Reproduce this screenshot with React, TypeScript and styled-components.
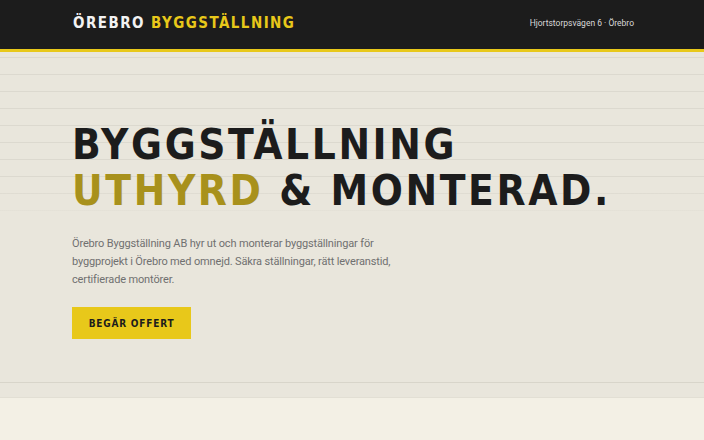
import styled, { createGlobalStyle } from 'styled-components';

const GlobalStyle = createGlobalStyle`
    html, body {
        margin: 0;
        padding: 0;
        background: #f3f0e5;
    }
    * {
        box-sizing: border-box;
    }
`;

const Page = styled.div`
    width: 704px;
    min-height: 440px;
    display: flex;
    flex-direction: column;
    background: #f3f0e5;
`;

const TopBar = styled.header`
    height: 52px;
    background: #1c1c1c;
    border-bottom: 3px solid #e8c81a;
    display: flex;
    align-items: center;
    justify-content: space-between;
    padding: 0 70px 0 73px;
`;

const Logo = styled.div`
    font-family: "DejaVu Sans Condensed", "DejaVu Sans", sans-serif;
    font-weight: bold;
    font-size: 15px;
    letter-spacing: 1.45px;
    color: #f2f2f2;
    margin-top: -4px;
`;

const LogoAccent = styled.span`
    color: #e8c81a;
`;

const Address = styled.div`
    font-family: Roboto, "Liberation Sans", sans-serif;
    font-size: 8.5px;
    color: #d8d8d8;
    margin-top: -3px;
`;

const Hero = styled.section`
    height: 331px;
    padding: 70px 72px 0;
    border-bottom: 1px solid #d8d5ca;
    background:
        linear-gradient(to bottom, rgba(233, 230, 220, 0) 0, rgba(233, 230, 220, 0) 130px, #e9e6dc 175px),
        repeating-linear-gradient(to bottom, transparent 0, transparent 5px, #dcd9cf 5px, #dcd9cf 6px, transparent 6px, transparent 17px);
    background-color: #e9e6dc;
`;

const Headline = styled.h1`
    margin: 0;
    font-family: "DejaVu Sans Condensed", "DejaVu Sans", sans-serif;
    font-weight: bold;
    font-size: 42px;
    line-height: 46px;
    letter-spacing: 2.6px;
    color: #1c1c1c;
`;

const Gold = styled.span`
    color: #a8911c;
`;

const Lead = styled.p`
    margin: 21px 0 0;
    width: 322px;
    font-family: Roboto, "Liberation Sans", sans-serif;
    font-size: 11px;
    letter-spacing: -0.15px;
    line-height: 18px;
    color: #707070;
`;

const QuoteButton = styled.button`
    margin-top: 18px;
    width: 119px;
    height: 32px;
    border: none;
    background: #e8c81a;
    color: #1c1c1c;
    font-family: "DejaVu Sans Condensed", "DejaVu Sans", sans-serif;
    font-weight: bold;
    font-size: 10px;
    letter-spacing: 0.8px;
    cursor: pointer;
`;

const Strip = styled.div`
    height: 15px;
    background: #e9e6dc;
    border-bottom: 1px solid #e2dfd4;
`;

const Section = styled.section`
    flex: 1;
    background: #f3f0e5;
`;

export default function App() {
    return (
        <Page>
            <GlobalStyle />
            <TopBar>
                <Logo>
                    ÖREBRO <LogoAccent>BYGGSTÄLLNING</LogoAccent>
                </Logo>
                <Address>Hjortstorpsvägen 6 · Örebro</Address>
            </TopBar>
            <Hero>
                <Headline>
                    BYGGSTÄLLNING
                    <br />
                    <Gold>UTHYRD</Gold> &amp; MONTERAD.
                </Headline>
                <Lead>
                    Örebro Byggställning AB hyr ut och monterar byggställningar för
                    byggprojekt i Örebro med omnejd. Säkra ställningar, rätt leveranstid,
                    certifierade montörer.
                </Lead>
                <QuoteButton>BEGÄR OFFERT</QuoteButton>
            </Hero>
            <Strip />
            <Section />
        </Page>
    );
}
